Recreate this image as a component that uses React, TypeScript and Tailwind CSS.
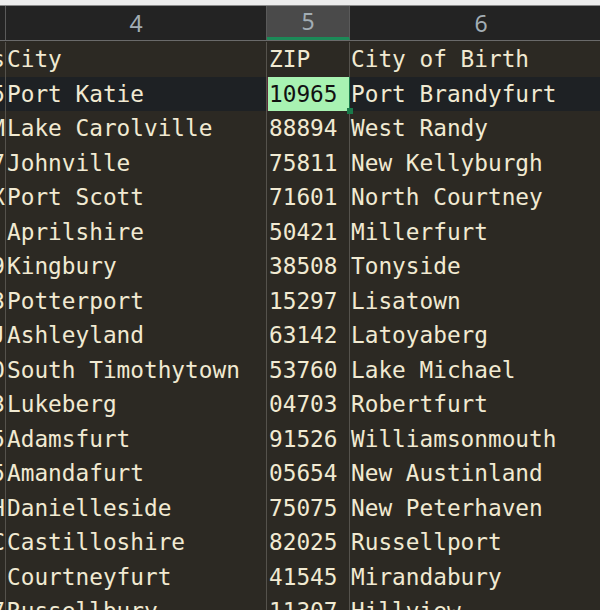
const rows: [string, string, string, string][] = [
  ['s', 'City', 'ZIP', 'City of Birth'],
  ['5', 'Port Katie', '10965', 'Port Brandyfurt'],
  ['M', 'Lake Carolville', '88894', 'West Randy'],
  ['7', 'Johnville', '75811', 'New Kellyburgh'],
  ['X', 'Port Scott', '71601', 'North Courtney'],
  [' ', 'Aprilshire', '50421', 'Millerfurt'],
  ['9', 'Kingbury', '38508', 'Tonyside'],
  ['3', 'Potterport', '15297', 'Lisatown'],
  ['J', 'Ashleyland', '63142', 'Latoyaberg'],
  ['0', 'South Timothytown', '53760', 'Lake Michael'],
  ['3', 'Lukeberg', '04703', 'Robertfurt'],
  ['5', 'Adamsfurt', '91526', 'Williamsonmouth'],
  ['5', 'Amandafurt', '05654', 'New Austinland'],
  ['H', 'Danielleside', '75075', 'New Peterhaven'],
  ['C', 'Castilloshire', '82025', 'Russellport'],
  [' ', 'Courtneyfurt', '41545', 'Mirandabury'],
  ['7', 'Russellbury', '11307', 'Hillview'],
];

const mono = { fontFamily: '"DejaVu Sans Mono", "Liberation Mono", monospace' };

export default function App() {
  return (
    <div className="w-[600px] h-[610px] overflow-hidden bg-[#2c2923] flex flex-col">
      <div className="h-[6px] shrink-0 bg-[#ececec] border-b border-[#8a8a8a]" />
      {/* column header */}
      <div
        className="flex h-[35px] shrink-0 bg-[#232323] border-b border-[#6a6a6a] text-[23px] text-[#a2adb4]"
        style={{ fontFamily: '"Noto Sans", "Open Sans", sans-serif' }}
      >
        <div className="w-[6px] shrink-0 border-r border-[#5a5a5a]" />
        <div className="w-[261px] shrink-0 flex items-center justify-center border-r border-[#5a5a5a]">4</div>
        <div className="w-[83px] shrink-0 flex items-center justify-center bg-[#4a4a4a] border-r border-[#5a5a5a] border-b-[3px] border-b-[#1c8a58]">
          5
        </div>
        <div className="w-[262px] shrink-0 flex items-center justify-center">6</div>
      </div>
      <div className="flex flex-col pt-[1px] text-[22.75px] text-[#f1ead2]" style={mono}>
        {rows.map((r, i) => {
          const sel = i === 1;
          return (
            <div key={i} className={`flex h-[34.5px] shrink-0 ${sel ? 'bg-[#1e2124]' : ''}`}>
              <div className="w-[6px] shrink-0 overflow-hidden flex justify-end items-center border-r border-[#55524c]">
                <span className="whitespace-pre">{r[0]}</span>
              </div>
              <div className="w-[261px] shrink-0 flex items-center pl-[1px] border-r border-[#55524c] whitespace-pre overflow-hidden">
                {r[1]}
              </div>
              {sel ? (
                <div className="relative w-[83px] shrink-0 flex items-center pl-[1px] bg-[#a8f2b2] text-[#111] border-l border-l-[#5a2a3a] border-r border-r-[#1a7a4a]">
                  {r[2]}
                  <div className="absolute right-[-4px] bottom-[-3px] w-[6px] h-[6px] bg-[#1a7a4a]" />
                </div>
              ) : (
                <div className="w-[83px] shrink-0 flex items-center pl-[2px] border-r border-[#55524c] whitespace-pre">
                  {r[2]}
                </div>
              )}
              <div className="w-[262px] shrink-0 flex items-center pl-[1px] whitespace-pre">{r[3]}</div>
            </div>
          );
        })}
      </div>
    </div>
  );
}
